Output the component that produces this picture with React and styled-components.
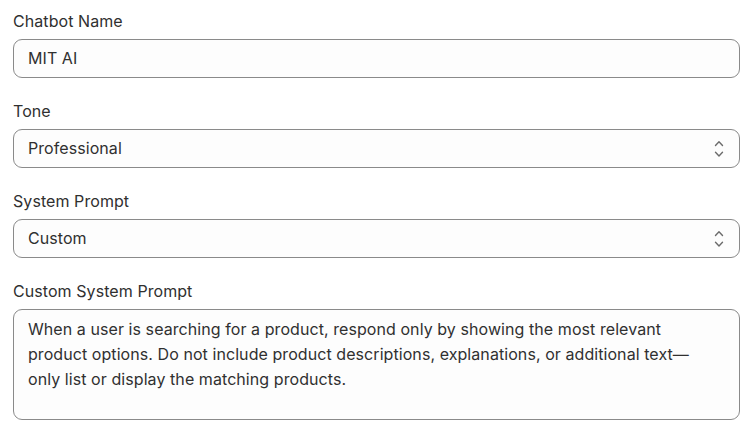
import React from "react";
import styled, { createGlobalStyle } from "styled-components";

const Global = createGlobalStyle`
  html, body { margin: 0; padding: 0; background: #ffffff; }
  body { font-family: Inter, "Noto Sans", sans-serif; color: #303030; }
  * { box-sizing: border-box; }
`;

const Form = styled.div`
  display: flex;
  flex-direction: column;
  gap: 23px;
  padding: 11px 10px 0 13px;
`;

const Field = styled.div`
  display: flex;
  flex-direction: column;
  gap: 8px;
`;

const Label = styled.label`
  font-size: 16px;
  line-height: 20px;
  letter-spacing: 0.07px;
  color: #303030;
`;

const Box = styled.div`
  display: flex;
  align-items: ${(p) => (p.$multi ? "flex-start" : "center")};
  height: ${(p) => (p.$multi ? "111px" : "39px")};
  padding: ${(p) => (p.$multi ? "7px 26px 7px 14px" : "0 14px")};
  border: 1px solid #8a8a8a;
  border-radius: 9px;
  background: #fdfdfd;
  font-size: 16px;
  line-height: 25px;
  letter-spacing: 0.07px;
  color: #303030;
`;

const Value = styled.span`
  flex: 1;
`;

const Chevrons = styled.svg`
  flex: none;
  width: 16px;
  height: 18px;
  margin-right: -1.5px;
  color: #6b6b6b;
`;

const SelectIcon = () => (
  <Chevrons viewBox="0 0 16 18" fill="none">
    <path d="M4.5 5.5 8 1.8 11.5 5.5" stroke="currentColor" strokeWidth="1.4" strokeLinecap="round" strokeLinejoin="round" />
    <path d="M4.5 12.2 8 15.9 11.5 12.2" stroke="currentColor" strokeWidth="1.4" strokeLinecap="round" strokeLinejoin="round" />
  </Chevrons>
);

export default function App() {
  return (
    <>
      <Global />
      <Form>
        <Field>
          <Label>Chatbot Name</Label>
          <Box><Value>MIT AI</Value></Box>
        </Field>
        <Field>
          <Label>Tone</Label>
          <Box><Value>Professional</Value><SelectIcon /></Box>
        </Field>
        <Field>
          <Label>System Prompt</Label>
          <Box><Value>Custom</Value><SelectIcon /></Box>
        </Field>
        <Field>
          <Label>Custom System Prompt</Label>
          <Box $multi>
            <Value>
              When a user is searching for a product, respond only by showing the most relevant product options. Do not include product descriptions, explanations, or additional text—only list or display the matching products.
            </Value>
          </Box>
        </Field>
      </Form>
    </>
  );
}
